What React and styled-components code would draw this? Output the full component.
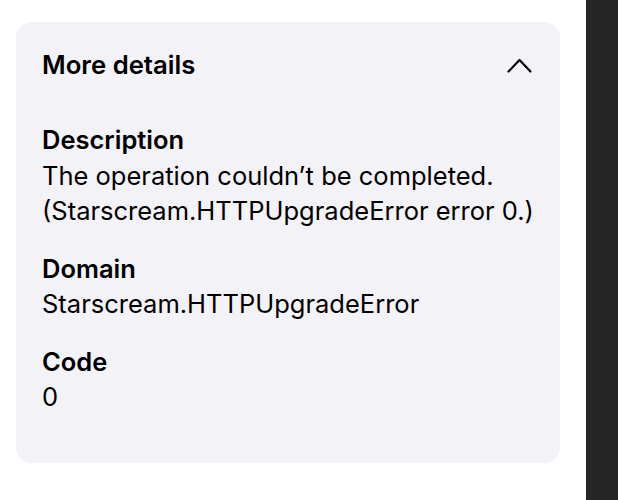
import React from 'react';
import styled, { createGlobalStyle } from 'styled-components';

const GlobalStyle = createGlobalStyle`
  html, body {
    margin: 0;
    padding: 0;
    background: #ffffff;
    font-family: Inter, "Noto Sans", sans-serif;
    color: #000000;
  }
`;

const Screen = styled.div`
  display: flex;
  width: 618px;
  height: 500px;
  overflow: hidden;
`;

const Main = styled.div`
  flex: 1;
  padding: 22px 26px 0 16px;
`;

const SideStrip = styled.div`
  width: 33px;
  height: 100%;
  background: #262626;
`;

const Card = styled.section`
  background: #f2f2f7;
  border-radius: 16px;
  padding: 25px 26px 0 26px;
  height: 441px;
  box-sizing: border-box;
`;

const Header = styled.div`
  display: flex;
  align-items: center;
  justify-content: space-between;
  height: 36px;
  margin-bottom: 39px;
`;

const Title = styled.h2`
  margin: 0;
  font-size: 25.7px;
  font-weight: 600;
  line-height: 36px;
`;

const ToggleButton = styled.button`
  border: 0;
  background: none;
  padding: 0;
  margin-right: 2px;
  display: flex;
  cursor: pointer;
`;

const Field = styled.div`
  & + & {
    margin-top: 22px;
  }
`;

const Label = styled.div`
  font-size: 25.5px;
  font-weight: 600;
  line-height: 35.5px;
`;

const Value = styled.div`
  font-size: 25.5px;
  font-weight: 400;
  line-height: 35.5px;
  white-space: nowrap;
`;

const ChevronUp = () => (
  <svg width="25" height="15" viewBox="0 0 25 15" fill="none">
    <polyline
      points="1.5,13.5 12.5,2 23.5,13.5"
      stroke="#000"
      strokeWidth="2.2"
      strokeLinecap="round"
      strokeLinejoin="round"
    />
  </svg>
);

const details = [
  {
    label: 'Description',
    lines: [
      'The operation couldn\u2019t be completed.',
      '(Starscream.HTTPUpgradeError error 0.)',
    ],
  },
  { label: 'Domain', lines: ['Starscream.HTTPUpgradeError'] },
  { label: 'Code', lines: ['0'] },
];

const App = () => (
  <Screen>
    <GlobalStyle />
    <Main>
      <Card>
        <Header>
          <Title>More details</Title>
          <ToggleButton aria-label="Collapse">
            <ChevronUp />
          </ToggleButton>
        </Header>
        {details.map((item) => (
          <Field key={item.label}>
            <Label>{item.label}</Label>
            {item.lines.map((line) => (
              <Value key={line}>{line}</Value>
            ))}
          </Field>
        ))}
      </Card>
    </Main>
    <SideStrip />
  </Screen>
);

export default App;
